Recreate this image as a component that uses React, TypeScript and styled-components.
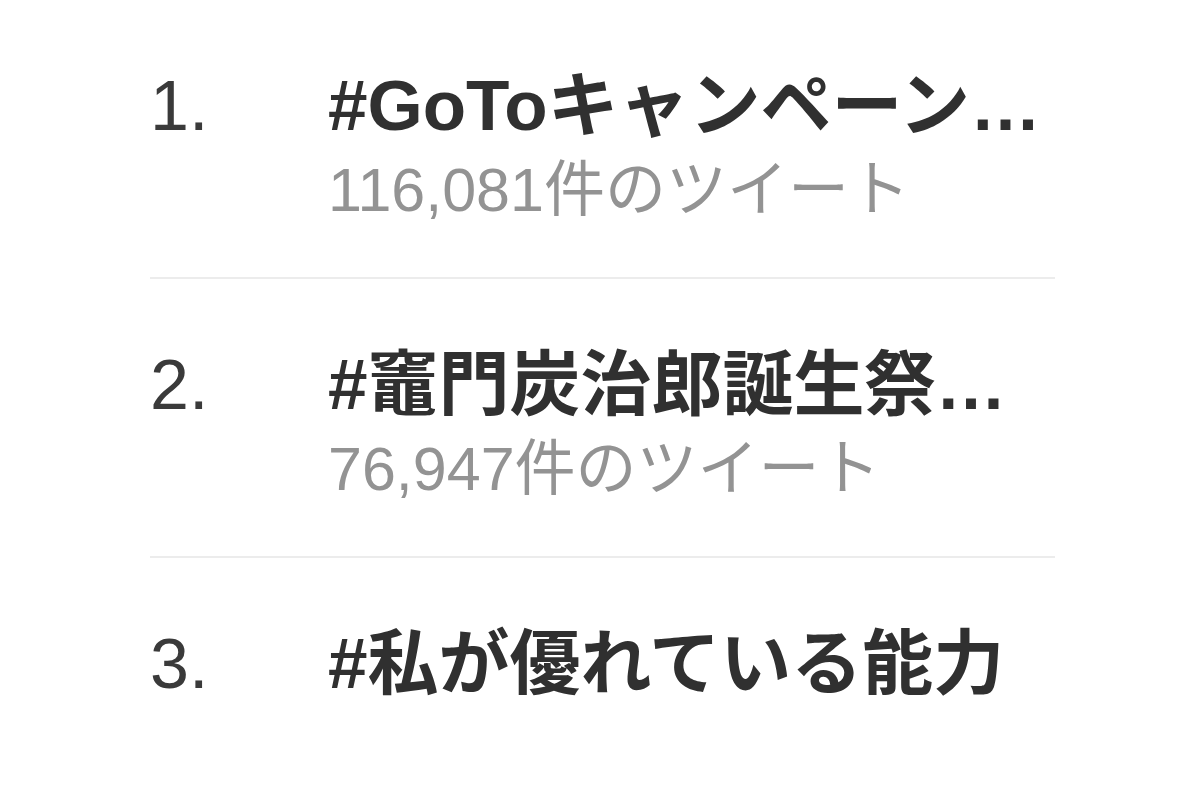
import styled, { createGlobalStyle } from "styled-components";

interface Trend {
    rank: number,
    title: string,
    tweets?: string
}

const trends: Trend[] = [
    { rank: 1, title: "#GoToキャンペーン反対", tweets: "116,081件のツイート" },
    { rank: 2, title: "#竈門炭治郎誕生祭２０２０", tweets: "76,947件のツイート" },
    { rank: 3, title: "#私が優れている能力" },
]

export default function App() {
    return (
        <>
            <GlobalStyle />
            <Page>
                <List>
                    {trends.map((t) => (
                        <Row key={t.rank}>
                            <Rank>{t.rank}.</Rank>
                            <Body>
                                <Title>{t.title}</Title>
                                {t.tweets && <Count>{t.tweets}</Count>}
                            </Body>
                        </Row>
                    ))}
                </List>
            </Page>
        </>
    )
}

const GlobalStyle = createGlobalStyle`
    html, body {
        margin: 0;
        background: #ffffff;
    }
    body {
        font-family: "Liberation Sans", "Noto Sans CJK JP", sans-serif;
    }
`

const Page = styled.div`
    width: 1200px;
    height: 812px;
    background: #ffffff;
    overflow: hidden;
`

const List = styled.ul`
    list-style: none;
    margin: 0 0 0 150px;
    padding: 0;
    width: 905px;
`

const Row = styled.li`
    display: flex;
    padding: 66px 0 43px;
    border-bottom: 2px solid #ececec;

    &:last-child {
        border-bottom: none;
    }
`

const Rank = styled.div`
    flex: 0 0 178px;
    font-size: 70px;
    line-height: 80px;
    color: #3a3a3a;
`

const Body = styled.div`
    flex: 1;
    min-width: 0;
`

const Title = styled.div`
    font-size: 71px;
    line-height: 80px;
    font-weight: 700;
    color: #303030;
    white-space: nowrap;
    overflow: hidden;
    text-overflow: ellipsis;
`

const Count = styled.div`
    font-size: 61px;
    line-height: 88px;
    color: #939393;
    white-space: nowrap;
`
